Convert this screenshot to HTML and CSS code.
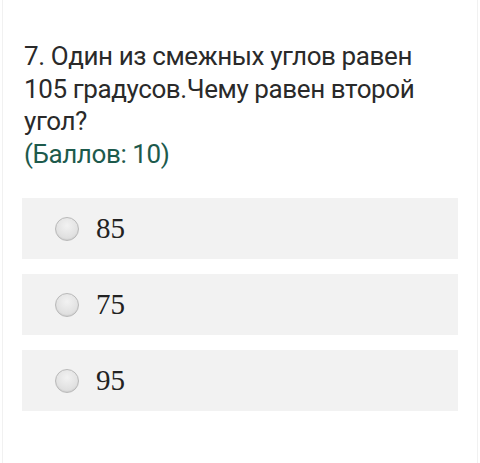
FILE: index.html
```html
<!DOCTYPE html>
<html>
<head>
<meta charset="utf-8">
<link rel="stylesheet" href="styles.css">
</head>
<body>
<div class="page">
  <div class="question">
    <p class="q-text">7. Один из смежных углов равен 105 градусов.Чему равен второй угол?</p>
    <p class="q-points">(Баллов: 10)</p>
  </div>
  <div class="options">
    <label class="option"><span class="radio"></span><span class="opt-text">85</span></label>
    <label class="option"><span class="radio"></span><span class="opt-text">75</span></label>
    <label class="option"><span class="radio"></span><span class="opt-text">95</span></label>
  </div>
</div>
</body>
</html>
```
FILE: styles.css
```css
html, body {
  margin: 0;
  padding: 0;
  background: #ffffff;
}
.page {
  width: 476px;
  height: 463px;
  box-sizing: border-box;
  margin: 0 2px;
  border-left: 1px solid #f1f1f1;
  border-right: 1px solid #f1f1f1;
  padding: 40px 0 0 21px;
}
.question {
  font-family: Roboto, "Noto Sans", sans-serif;
  font-size: 26px;
  letter-spacing: -0.4px;
  line-height: 32.5px;
  color: #2a2a2a;
  width: 420px;
}
.q-text {
  margin: 0;
}
.q-points {
  margin: 0;
  color: #1d5a4c;
}
.options {
  margin-top: 28px;
  margin-left: -2px;
  width: 436px;
  display: flex;
  flex-direction: column;
  gap: 15px;
}
.option {
  display: flex;
  align-items: center;
  height: 61px;
  background: #f2f2f2;
  padding-left: 33px;
}
.radio {
  width: 22px;
  height: 22px;
  border-radius: 50%;
  border: 1px solid #b9b9b9;
  background: radial-gradient(circle at 50% 35%, #f2f2f2 0%, #e2e2e2 60%, #d6d6d6 100%);
  box-shadow: inset 0 -1px 1px rgba(0,0,0,0.06);
  flex: none;
}
.opt-text {
  margin-left: 17px;
  font-family: "Liberation Serif", "Times New Roman", serif;
  font-size: 29px;
  color: #222222;
}
```
